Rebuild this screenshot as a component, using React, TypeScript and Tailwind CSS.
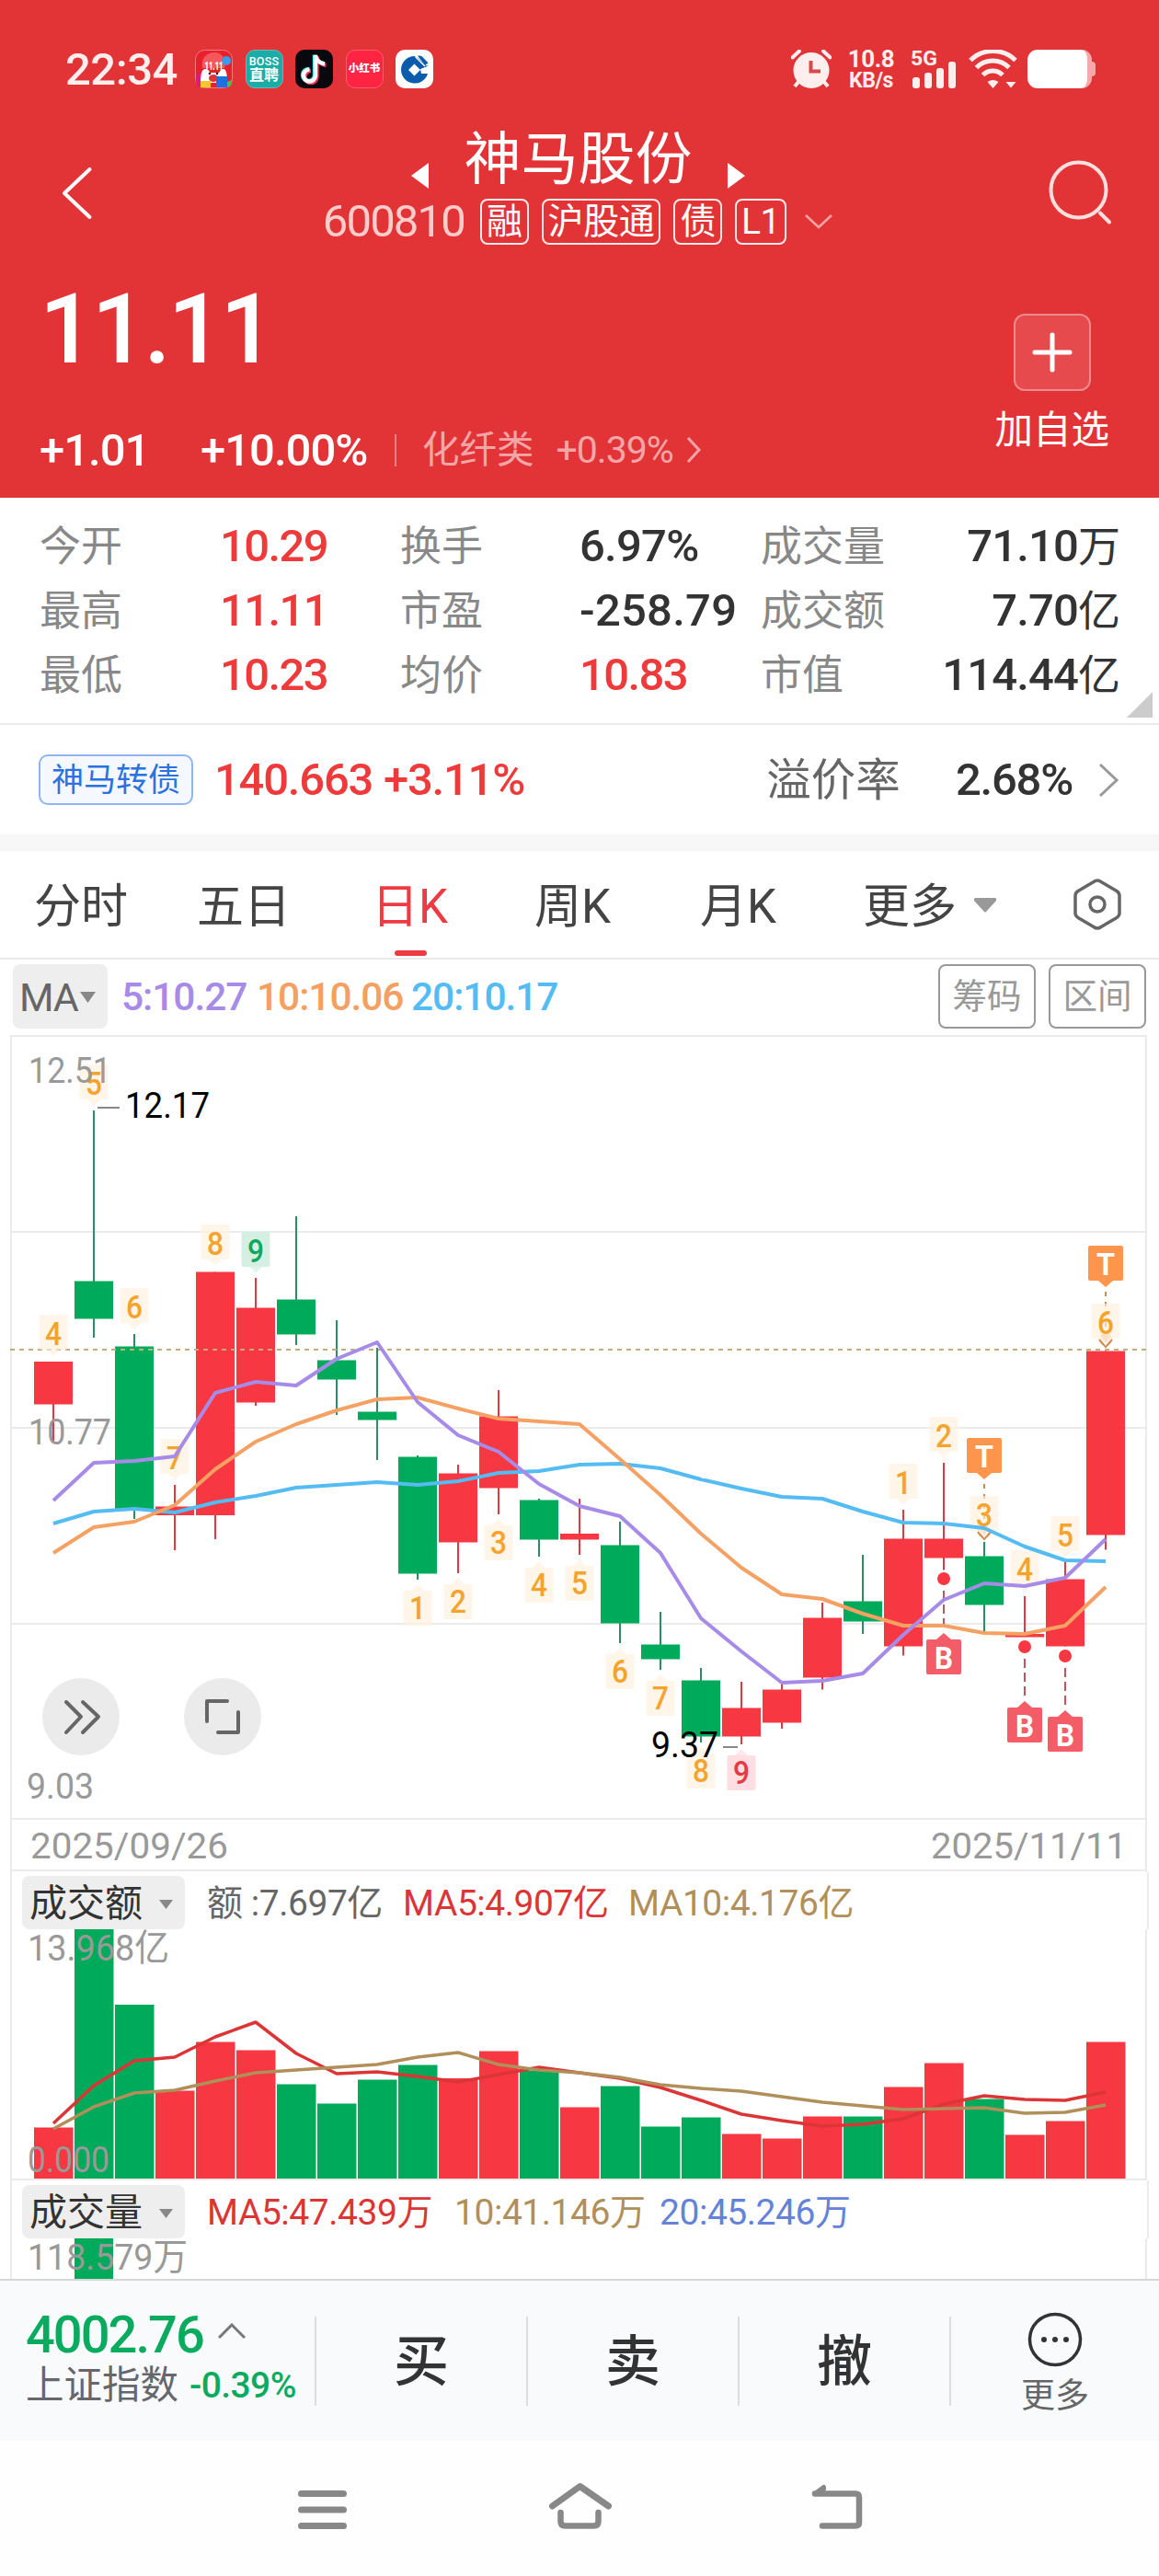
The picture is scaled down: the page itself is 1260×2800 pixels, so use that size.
import type { ReactNode } from "react";

const UP = "#f73842";
const DOWN = "#00aa5b";

// [high, low, bodyTop, bodyBottom, isUp]
const candles: [number, number, number, number, boolean][] = [
  [1480, 1568, 1480, 1526.5, true],
  [1207, 1454, 1392.5, 1433.5, false],
  [1450, 1651, 1463.5, 1640, false],
  [1614, 1685, 1637.5, 1647, true],
  [1382.5, 1673, 1382.5, 1647, true],
  [1389, 1528, 1421.5, 1524.5, true],
  [1322, 1462, 1412.5, 1450.5, false],
  [1435, 1538, 1478.5, 1499.5, false],
  [1465, 1587, 1534.5, 1543.5, false],
  [1582, 1717, 1583.5, 1710.5, false],
  [1592, 1710, 1601.5, 1676.5, true],
  [1511, 1646, 1539.5, 1617.5, true],
  [1629, 1692, 1630.5, 1673.5, false],
  [1629, 1690, 1667, 1673.5, true],
  [1654, 1786, 1679.5, 1764.5, false],
  [1752, 1815, 1787.5, 1803.5, false],
  [1813, 1894, 1826.5, 1887.5, false],
  [1828, 1896, 1856.5, 1887.5, true],
  [1831, 1879, 1836.5, 1872.5, true],
  [1742, 1836.5, 1758.5, 1823.5, true],
  [1690, 1776, 1740.5, 1762.5, false],
  [1641, 1799.5, 1672.5, 1789.5, true],
  [1590, 1706.5, 1672.5, 1693.5, true],
  [1676, 1775, 1691.5, 1744.5, false],
  [1735, 1779, 1776, 1779.5, true],
  [1697, 1789.5, 1716.5, 1789.5, true],
  [1468.5, 1684.5, 1468.5, 1668.5, true],
];

const ma5 = [1631, 1590, 1588, 1583, 1514, 1502, 1506, 1477, 1459, 1524, 1560, 1578, 1613, 1637, 1648, 1688, 1759, 1795, 1829, 1827, 1819, 1777, 1739, 1721, 1724, 1715, 1673];
const ma10 = [1688, 1660, 1654, 1636, 1597, 1567, 1548, 1533, 1521, 1519, 1531, 1542, 1545, 1548, 1586, 1625, 1667, 1704, 1733, 1738, 1754, 1767, 1767, 1775, 1776, 1767, 1725];
const ma20 = [1656, 1643, 1640, 1644, 1633, 1626, 1617, 1614, 1611, 1614, 1610, 1601, 1599, 1592, 1591, 1596, 1608, 1618, 1627, 1629, 1643, 1655, 1656, 1661, 1681, 1696, 1697];

const amountTops = [2312.5, 2097, 2179, 2272.5, 2219.5, 2228.5, 2265.5, 2286.5, 2260.5, 2244.5, 2259, 2229.5, 2251, 2290.5, 2267.5, 2311.5, 2301.5, 2319.5, 2324.5, 2300.5, 2300.5, 2268.5, 2242.5, 2281.5, 2320.5, 2305.5, 2219.5];
const amountMa5 = [2308, 2267, 2240, 2236, 2214, 2198, 2232, 2254, 2252, 2257, 2263, 2255, 2247, 2253, 2259, 2269, 2283, 2298, 2305, 2311, 2309, 2303, 2287, 2278, 2282, 2283, 2274];
const amountMa10 = [2314, 2290, 2275, 2272, 2262, 2253, 2250, 2247, 2244, 2236, 2231, 2244, 2250, 2253, 2258, 2266, 2270, 2273, 2279, 2285, 2289, 2293, 2292, 2291, 2297, 2296, 2288];

// nine-turn counters: [candle index, digit, box top, arrow side, tone]
const counters: [number, string, number, "down" | "up", string?][] = [
  [0, "4", 1429, "down"],
  [1, "5", 1157, "down"],
  [2, "6", 1400, "down"],
  [3, "7", 1564, "down"],
  [4, "8", 1331, "down"],
  [5, "9", 1339, "down", "green"],
  [9, "1", 1729, "up"],
  [10, "2", 1722, "up"],
  [11, "3", 1658, "up"],
  [12, "4", 1704, "up"],
  [13, "5", 1702, "up"],
  [14, "6", 1798, "up"],
  [15, "7", 1827, "up"],
  [16, "8", 1906, "up"],
  [17, "9", 1908, "up", "red"],
  [21, "1", 1591, "down"],
  [22, "2", 1540, "down"],
  [23, "3", 1626, "down"],
  [24, "4", 1685, "down"],
  [25, "5", 1648, "down"],
  [26, "6", 1417, "down"],
];

const cx = (i: number) => 58 + i * 44;
const toPoints = (ys: number[]) => ys.map((y, i) => `${cx(i)},${y}`).join(" ");

const ChartText = ({ x, y, w, size = 39.5, fill = "#999", weight = 400, children }: { x: number; y: number; w: number; size?: number; fill?: string; weight?: number; children: string }) => (
  <text x={x} y={y} fontSize={size} fill={fill} fontWeight={weight} textLength={w} lengthAdjust="spacingAndGlyphs">
    {children}
  </text>
);

const Counter = ({ i, digit, top, side, tone }: { i: number; digit: string; top: number; side: string; tone?: string }) => {
  const x = cx(i);
  const bg = tone === "green" ? "#d3efe2" : tone === "red" ? "#ffdce0" : "#ffefdd";
  const fg = tone === "green" ? "#0ea661" : tone === "red" ? "#e63946" : "#f6a32c";
  const tip = side === "down" ? `M${x - 7} ${top + 38}h14l-7 7z` : `M${x - 7} ${top}h14l-7 -7z`;
  const baseline = side === "down" ? top + 33 : top + 31;
  return (
    <g>
      <rect x={x - 15.5} y={top} width="31" height="38" rx="2" fill={bg} fillOpacity={tone ? 0.95 : 0.65} />
      <path d={tip} fill={bg} fillOpacity="0.65" />
      <text x={x} y={baseline} fontSize="35" fontWeight="500" fill={fg} textAnchor="middle" textLength="18" lengthAdjust="spacingAndGlyphs">
        {digit}
      </text>
    </g>
  );
};

const SellMark = ({ i, top }: { i: number; top: number }) => {
  const x = cx(i);
  return (
    <g>
      <path d={`M${x} ${top + 50}V${top + 96}`} stroke="#c98f55" strokeWidth="2" strokeDasharray="5 6" />
      <circle cx={x} cy={top + 102} r="7" fill="#fbc295" />
      <path d={`M${x - 7} ${top + 102}l7 8l7 -8`} fill="none" stroke="#d08b50" strokeWidth="2" />
      <path d={`M${x - 6} ${top + 99}l6 8l6 -8`} fill="none" stroke="#fff" strokeWidth="2" />
      <rect x={x - 19} y={top} width="38" height="38" rx="2" fill="#fd954c" />
      <path d={`M${x - 8} ${top + 38}h16l-8 7z`} fill="#fd954c" />
      <text x={x} y={top + 31.5} fontSize="34" fontWeight="700" fill="#fff" textAnchor="middle" textLength="20" lengthAdjust="spacingAndGlyphs">
        T
      </text>
    </g>
  );
};

const BuyMark = ({ i, dot, top }: { i: number; dot: number; top: number }) => {
  const x = cx(i);
  return (
    <g>
      <circle cx={x} cy={dot} r="7" fill={UP} />
      <path d={`M${x} ${dot + 13}V${top - 12}`} stroke="#c05560" strokeWidth="2" strokeDasharray="10 5" />
      <rect x={x - 19} y={top} width="38" height="38" rx="2" fill="#f45d68" />
      <path d={`M${x - 8} ${top}h16l-8 -7z`} fill="#f45d68" />
      <text x={x} y={top + 32} fontSize="34" fontWeight="700" fill="#fff" textAnchor="middle" textLength="20" lengthAdjust="spacingAndGlyphs">
        B
      </text>
    </g>
  );
};

const StatusBar = () => (
  <div className="flex h-[42px] items-center pl-[71px] pr-[69px]">
    <span className="w-[141px] text-[49px] font-medium leading-none tracking-[-0.01em] text-[#ffeeee]">22:34</span>
    <div className="flex gap-[13.5px]">
      {/* shopping app */}
      <svg className="h-[42px] w-[41px]" viewBox="0 0 41 42">
        <rect x=".5" y=".5" width="40" height="41" rx="10" fill="#e8202b" stroke="#f27a80" />
        <path d="M8 20C6 8 14 3 21 3s14 6 11 17z" fill="#f4575c" />
        <circle cx="34" cy="12" r="5" fill="#3b9be8" />
        <path d="M1 27l10-4v18h-4q-6 0-6-7z" fill="#e2197c" />
        <path d="M6 36q0-15 5-15q4 0 5 4h10q2-4 5-4q4 0 4 15z" fill="#fff" />
        <ellipse cx="20" cy="31" rx="5" ry="4" fill="#e03138" />
        <circle cx="16" cy="26" r="1.3" fill="#222" />
        <circle cx="24" cy="26" r="1.3" fill="#222" />
        <rect x="6" y="34" width="11" height="7" fill="#f8c62c" />
        <rect x="23" y="29" width="12" height="12" fill="#1f6fe0" />
        <path d="M35 35l5-2q1 7-5 8z" fill="#4cc04a" />
        <text x="20.500" y="22" fontSize="13" fontWeight="900" fill="#fff" textAnchor="middle" textLength="20" lengthAdjust="spacingAndGlyphs">11.11</text>
      </svg>
      <div className="flex h-[42px] w-[41px] flex-col items-center justify-center rounded-[10px] border border-[#6cb9b4] bg-[#1aada7] font-medium text-white">
        <span className="text-[12.5px] leading-[13px] tracking-[0.02em]">BOSS</span>
        <span className="text-[16px] font-bold leading-[17px]">直聘</span>
      </div>
      <svg className="h-[42px] w-[41px]" viewBox="0 0 41 42">
        <rect width="41" height="42" rx="10" fill="#08080f" />
        <g fill="none" strokeWidth="4.400">
          <path d="M22 6v22a6.500 6.500 0 1 1-6.500-6.500M22 6q1 8 10 9.500" stroke="#2be6e0" transform="translate(-1 -.5)" />
          <path d="M22 6v22a6.500 6.500 0 1 1-6.500-6.500M22 6q1 8 10 9.500" stroke="#f5305a" transform="translate(1.500 1.500)" />
          <path d="M22 6v22a6.500 6.500 0 1 1-6.500-6.500M22 6q1 8 10 9.500" stroke="#fff" />
        </g>
      </svg>
      <div className="flex h-[42px] w-[41px] items-center justify-center rounded-[10px] border border-[#ff5a6c] bg-[#ff2442] text-[11.5px] font-black leading-none text-white">
        小红书
      </div>
      <svg className="h-[42px] w-[41px]" viewBox="0 0 41 42">
        <rect width="41" height="42" rx="10" fill="#fff" />
        <path d="M20.500 7a14.800 14.800 0 1 0 14.500 19h-7l-1-5 9-3.500-2.500 0-9-8.500z" fill="#0c5cae" />
        <path d="M24 6.500q3-.5 5 1l6.500 7-3.500 2.500z" fill="#0c5cae" />
        <path d="M21.500 7.500L32 18" stroke="#fff" strokeWidth="1.500" />
        <path d="M20.500 15.500l6.500 6.500-6.500 6.500-6.500-6.500z" fill="#fff" />
      </svg>
    </div>

    <div className="ml-auto flex h-[42px] items-start">
      <svg className="h-[42px] w-[44px]" viewBox="0 0 44 42">
        <circle cx="22" cy="22.500" r="19.500" fill="#ffeeee" />
        <path d="M8 35l-4 5M36 35l4 5" stroke="#ffeeee" strokeWidth="4" />
        <path d="M1.500 8.500L9 1.500M42.500 8.500L35 1.500" stroke="#ffeeee" strokeWidth="4" strokeLinecap="round" />
        <path d="M21.500 12v11.500h10.500" stroke="#d9494b" strokeWidth="4" fill="none" />
      </svg>
      <div className="ml-[15px] flex w-[56px] flex-col items-center whitespace-nowrap text-[#ffeeee]">
        <span className="text-[26px] font-bold leading-[21px] tracking-[-0.015em]">10.8</span>
        <span className="mt-[1px] text-[23px] font-bold leading-[24px] tracking-[-0.02em]">KB/s</span>
      </div>
      <svg className="ml-[15px] h-[42px] w-[52px] overflow-visible" viewBox="0 0 52 42">
        <text x="0" y="16.500" fontSize="22.500" fontWeight="700" fill="#ffeeee" textLength="29" lengthAdjust="spacingAndGlyphs">5G</text>
        <g fill="#ffeeee">
          <rect x="2" y="30" width="8" height="12" rx="3" />
          <rect x="15" y="25" width="8" height="17" rx="3" />
          <rect x="28" y="20" width="8" height="22" rx="3" />
          <rect x="41" y="13" width="8" height="29" rx="3" />
        </g>
      </svg>
      <svg className="ml-[11px] h-[42px] w-[53px]" viewBox="0 0 53 42">
        <g fill="none" stroke="#ffeeee" strokeWidth="5">
          <path d="M2 11.500a35 35 0 0 1 49 0" />
          <path d="M8.500 19.500a25 25 0 0 1 35.500 0" />
          <path d="M15.500 27.500a15 15 0 0 1 21.500 0" />
        </g>
        <path d="M20.500 35q6-4 12 0l-6 7zM40.500 35h11l-5.500 6.500z" fill="#ffeeee" />
      </svg>
      <div className="ml-[11px] h-[42px] w-[70px] rounded-[11px] border-r-[5px] border-[#f5a9aa] bg-white" />
      <div className="mt-[13px] h-[16px] w-[4px] rounded-r-[4px] bg-[#f5a9aa]" />
    </div>
  </div>
);

const Tag = ({ children }: { children: ReactNode }) => (
  <span className="flex h-[50px] items-center justify-center rounded-[8px] border-2 border-[#ffe9e9] px-[5px] text-[39px] leading-none tracking-[-0.01em] text-white">{children}</span>
);

const Header = () => (
  <header className="h-[541px] bg-[#e23437] pt-[54px] text-white">
    <StatusBar />
    <div className="flex items-start justify-between pl-[67px] pr-[50px] pt-[42px]">
      <svg className="mt-[42px] h-[60px] w-[36px]" viewBox="0 0 36 60" fill="none" stroke="#fff" strokeWidth="4" strokeLinecap="round" strokeLinejoin="round">
        <path d="M30.500 4L3 30l27.500 26" />
      </svg>
      <div className="flex flex-col items-center pl-[16px]">
        <div className="flex items-center">
          <svg className="mt-[34px] h-[30px] w-[21px]" viewBox="0 0 21 30"><path d="M20 1v28L1 15z" fill="#fff" /></svg>
          <h1 className="mx-[37px] h-[72px] pt-[3px] text-[62px] leading-[66px]">神马股份</h1>
          <svg className="mt-[34px] h-[30px] w-[21px]" viewBox="0 0 21 30"><path d="M1 1v28l19-14z" fill="#fff" /></svg>
        </div>
        <div className="mt-[6px] flex items-center gap-[14px]">
          <span className="mr-[3px] text-[49px] leading-[50px] tracking-[-0.038em] text-[#ffcccc]">600810</span>
          <Tag>融</Tag>
          <Tag>沪股通</Tag>
          <Tag>债</Tag>
          <Tag>L1</Tag>
          <svg className="ml-[5px] h-[18px] w-[32px]" viewBox="0 0 32 18" fill="none" stroke="#f3a5a6" strokeWidth="2.500">
            <path d="M2 2l14 13L30 2" />
          </svg>
        </div>
      </div>
      <svg className="mt-[35px] h-[72px] w-[72px]" viewBox="0 0 72 72" fill="none" stroke="#ffdede" strokeWidth="4" strokeLinecap="round">
        <circle cx="34.500" cy="33.500" r="30" />
        <path d="M58 58.500l10 10" />
      </svg>
    </div>

    <div className="flex justify-between pl-[43px] pr-[54px]">
      <div>
        <div className="mt-[40px] h-[106px] text-[105px] font-medium leading-[106px] tracking-[-0.028em]">11.11</div>
        <div className="mt-[52px] flex h-[50px] items-center text-[49px] font-medium leading-none tracking-[-0.02em]">
          <span className="w-[175px]">+1.01</span>
          <span className="w-[211px]">+10.00%</span>
          <span className="h-[35px] w-[2px] bg-[#ed8082]" />
          <span className="ml-[28px] text-[40.500px] font-normal tracking-normal text-[#f3a6a7]">化纤类</span>
          <span className="ml-[24px] text-[41px] font-normal text-[#f3a6a7]">+0.39%</span>
          <svg className="ml-[14px] h-[30px] w-[17px]" viewBox="0 0 17 30" fill="none" stroke="#f3a6a7" strokeWidth="3"><path d="M2 2l12 13L2 28" /></svg>
        </div>
      </div>
      <div className="flex flex-col items-center pt-[75px]">
        <button className="flex h-[84px] w-[84px] items-center justify-center rounded-[12px] border-2 border-[#ec8a8c] bg-[#e64a4c]">
          <svg className="h-[44px] w-[44px]" viewBox="0 0 44 44" stroke="#fff" strokeWidth="5" strokeLinecap="round"><path d="M22 3v38M3 22h38" /></svg>
        </button>
        <span className="mt-[18px] text-[41.500px] leading-[50px]">加自选</span>
      </div>
    </div>
  </header>
);

const quotes = [
  ["今开", "10.29", "换手", "6.97%", "成交量", "71.10万"],
  ["最高", "11.11", "市盈", "-258.79", "成交额", "7.70亿"],
  ["最低", "10.23", "均价", "10.83", "市值", "114.44亿"],
];

const QuoteLabel = ({ children }: { children: string }) => (
  <span className="pt-[2px] text-[45px] tracking-normal text-[#888]">{children}</span>
);

const Quotes = () => (
  <section className="relative h-[247px] border-b-2 border-[#ebebeb] bg-white pl-[43px] pr-[43px] pt-[17px]">
    {quotes.map((row, r) => (
      <div key={r} className="grid h-[70px] grid-cols-[196px_196px_195px_197px_170px_1fr] items-center whitespace-nowrap text-[49px] leading-none tracking-[-0.033em] text-[#333]">
        <QuoteLabel>{row[0]}</QuoteLabel>
        <span className="font-medium text-[#ee3a3a]">{row[1]}</span>
        <QuoteLabel>{row[2]}</QuoteLabel>
        <span className={r === 0 ? "font-medium tracking-[-0.015em]" : r === 1 ? "font-medium tracking-[0.005em]" : "font-medium text-[#ee3a3a]"}>{row[3]}</span>
        <QuoteLabel>{row[4]}</QuoteLabel>
        <span className="flex items-center justify-end font-medium tracking-[-0.018em]">
          {row[5].slice(0, -1)}
          <span className="pt-[2px] text-[46px] font-normal">{row[5].slice(-1)}</span>
        </span>
      </div>
    ))}
    <svg className="absolute bottom-[6px] right-[7px] h-[28px] w-[28px]" viewBox="0 0 28 28"><path d="M28 0v28H0z" fill="#ccc" /></svg>
  </section>
);

const BondRow = () => (
  <section className="flex h-[119px] items-center bg-white pl-[42px] pr-[43px] text-[49px] font-medium leading-none tracking-[-0.025em]">
    <span className="flex h-[55px] w-[168px] items-center justify-center rounded-[10px] border-2 border-[#8fb5f0] bg-[#f5f9ff] pt-[2px] text-[35px] font-normal tracking-normal text-[#2a72e0]">神马转债</span>
    <span className="ml-[23px] w-[184px] text-[#ee3a3a]">140.663</span>
    <span className="text-[#ee3a3a]">+3.11%</span>
    <span className="ml-auto pt-[3px] text-[48.500px] font-normal tracking-normal text-[#666]">溢价率</span>
    <span className="ml-[60px] text-[#333]">2.68%</span>
    <svg className="ml-[27px] h-[38px] w-[24px]" viewBox="0 0 24 38" fill="none" stroke="#999" strokeWidth="3"><path d="M3 2l18 17L3 36" /></svg>
  </section>
);

const Tabs = () => (
  <nav className="flex h-[118px] items-center border-b-2 border-[#ebebeb] bg-white pl-[37px] text-[51px] leading-none text-[#444]">
    <span className="w-[177px] pt-[4px]">分时</span>
    <span className="w-[190px] pt-[4px]">五日</span>
    <span className="relative w-[177px] pt-[4px] text-[#ee3a42]">
      日K
      <i className="absolute left-[25px] top-[77px] h-[6px] w-[35px] rounded-full bg-[#ee3a42]" />
    </span>
    <span className="w-[180px] pt-[4px]">周K</span>
    <span className="w-[177px] pt-[4px]">月K</span>
    <span className="pt-[4px]">更多</span>
    <svg className="ml-[18px] mt-[2px] h-[16px] w-[26px]" viewBox="0 0 26 16"><path d="M2 0h22q2 1 1 3L14 15q-1 1-2 0L1 3Q0 1 2 0z" fill="#999" /></svg>
    <svg className="ml-[82px] h-[58px] w-[54px]" viewBox="0 0 54 58" fill="none" stroke="#666" strokeWidth="3.500" strokeLinejoin="round">
      <path d="M27 3q2 0 4 1.500l17 10q3 2 3 5v19q0 3-3 5l-17 10q-4 3-8 0l-17-10q-3-2-3-5v-19q0-3 3-5l17-10Q25 3 27 3z" />
      <circle cx="27" cy="29" r="8" />
    </svg>
  </nav>
);

const MaRow = () => (
  <div className="flex h-[82px] items-center bg-white pb-[2px] pl-[14px] pr-[14px] text-[42.500px] leading-none tracking-[-0.025em]">
    <span className="flex h-[70px] w-[103px] items-center rounded-[8px] bg-[#eeeeee] pl-[7px] pt-[2px] text-[43px] text-[#666]">
      MA
      <svg className="ml-[2px] h-[12px] w-[17px]" viewBox="0 0 17 12"><path d="M0 0h17l-8.500 12z" fill="#888" /></svg>
    </span>
    <span className="ml-[15px] w-[147px] pt-[3px] font-medium text-[#a78be8]">5:10.27</span>
    <span className="w-[168px] pt-[3px] font-medium text-[#f5a063]">10:10.06</span>
    <span className="pt-[3px] font-medium text-[#54bcf5]">20:10.17</span>
    <span className="ml-auto flex h-[70px] w-[106px] items-center justify-center rounded-[8px] border-2 border-[#999] pt-[2px] text-[37.500px] tracking-normal text-[#999]">筹码</span>
    <span className="ml-[14px] flex h-[70px] w-[106px] items-center justify-center rounded-[8px] border-2 border-[#999] pt-[2px] text-[37.500px] tracking-normal text-[#999]">区间</span>
  </div>
);

const KLineChart = () => (
  <svg className="block h-[910px] w-[1260px]" viewBox="0 1125 1260 910">
    <g stroke="#ebebeb" strokeWidth="2">
      <path d="M11 1126H1247M12 1339H1247M12 1552H1247M12 1765H1247M12 1977H1247M12 2033H1247" />
      <path d="M12 1125V2035M1246 1125V2035" />
    </g>
    {candles.map(([high, low, top, bottom, up], i) => (
      <g key={i}>
        <rect x={cx(i) - 1} y={high} width="2" height={low - high} fill={up ? "#e23a44" : "#2a8f62"} />
        <rect x={cx(i) - 21} y={top} width="42" height={bottom - top} fill={up ? UP : DOWN} />
      </g>
    ))}
    <path d="M11 1467H1246" stroke="#c8ab7a" strokeWidth="2" strokeDasharray="5 5" />

    <BuyMark i={22} dot={1716} top={1782} />
    <BuyMark i={24} dot={1790} top={1856} />
    <BuyMark i={25} dot={1800} top={1866} />
    <SellMark i={23} top={1563} />
    <SellMark i={26} top={1354} />
    {counters.map(([i, digit, top, side, tone]) => (
      <Counter key={i} i={i} digit={digit} top={top} side={side} tone={tone} />
    ))}

    <g fill="none" strokeWidth="4" strokeLinejoin="round">
      <polyline points={toPoints(ma20)} stroke="#54bcf2" />
      <polyline points={toPoints(ma10)} stroke="#f5a163" />
      <polyline points={toPoints(ma5)} stroke="#a78be8" />
    </g>

    <ChartText x={31} y={1177} w={90}>12.51</ChartText>
    <ChartText x={31} y={1570} w={90}>10.77</ChartText>
    <ChartText x={29} y={1955} w={73}>9.03</ChartText>
    <path d="M106 1204h24M786 1899h16" stroke="#888" strokeWidth="2" />
    <ChartText x={136} y={1215} w={92} fill="#000">12.17</ChartText>
    <ChartText x={708} y={1910} w={73} fill="#000">9.37</ChartText>
    <ChartText x={33} y={2020} w={215}>2025/09/26</ChartText>
    <ChartText x={1012} y={2020} w={213}>2025/11/11</ChartText>

    <g>
      <circle cx="88" cy="1866" r="42" fill="#ebebeb" />
      <circle cx="242" cy="1866" r="42" fill="#ebebeb" />
      <g fill="none" stroke="#666" strokeWidth="4" strokeLinecap="round" strokeLinejoin="round">
        <path d="M72 1850l16 16l-16 17M90 1850l17 16l-17 17" />
        <path d="M225 1871v-22h22M259 1861v22h-22" />
      </g>
    </g>
  </svg>
);

const IndicatorChip = ({ children }: { children: string }) => (
  <span className="mr-[24px] flex h-[58px] w-[177px] items-center rounded-[8px] bg-[#eeeeee] pl-[8px] pt-[3px] text-[41px] tracking-normal text-[#333]">
    {children}
    <svg className="ml-[18px] h-[10px] w-[15px]" viewBox="0 0 15 10"><path d="M0 0h15l-7.500 10z" fill="#888" /></svg>
  </span>
);

const AmountPanel = () => (
  <section className="bg-white">
    <div className="mx-[11px] flex h-[62px] items-center border-x-2 border-[#ebebeb] pl-[11px] pt-[4px] text-[39px] leading-none tracking-[-0.012em]">
      <IndicatorChip>成交额</IndicatorChip>
      <span className="w-[213px] whitespace-pre pt-[3px] text-[#666]">额 :7.697亿</span>
      <span className="w-[245px] pt-[3px] text-[#dc3536]">MA5:4.907亿</span>
      <span className="pt-[3px] text-[#b08f5a]">MA10:4.176亿</span>
    </div>
    <svg className="block h-[273px] w-[1260px] overflow-visible" viewBox="0 2097 1260 273">
      <path d="M12 2097V2370M1246 2097V2370M12 2369H1247" stroke="#ebebeb" strokeWidth="2" />
      {amountTops.map((top, i) => (
        <rect key={i} x={cx(i) - 21} y={top} width="42.500" height={2368 - top} fill={candles[i][4] ? UP : DOWN} />
      ))}
      <g fill="none" strokeWidth="3.500" strokeLinejoin="round">
        <polyline points={toPoints(amountMa5)} stroke="#dc3536" />
        <polyline points={toPoints(amountMa10)} stroke="#b08f5a" />
      </g>
      <ChartText x={30} y={2131} w={154}>13.968亿</ChartText>
      <ChartText x={30} y={2361} w={89}>0.000</ChartText>
    </svg>
  </section>
);

const VolumePanel = () => (
  <section className="bg-white">
    <div className="mx-[11px] flex h-[63px] items-center border-x-2 border-[#ebebeb] pl-[11px] pt-[5px] text-[39px] leading-none tracking-[-0.012em]">
      <IndicatorChip>成交量</IndicatorChip>
      <span className="w-[269px] pt-[3px] text-[#dc3536]">MA5:47.439万</span>
      <span className="w-[223px] pt-[3px] text-[#b08f5a]">10:41.146万</span>
      <span className="pt-[3px] text-[#6482d8]">20:45.246万</span>
    </div>
    <svg className="block h-[44px] w-[1260px] overflow-visible" viewBox="0 2433 1260 44">
      <path d="M12 2433V2477M1246 2433V2477" stroke="#ebebeb" strokeWidth="2" />
      <rect x={cx(1) - 21} y="2433" width="42" height="44" fill={DOWN} />
      <ChartText x={30} y={2467} w={174}>118.579万</ChartText>
    </svg>
  </section>
);

const TradeBar = () => (
  <footer className="flex h-[176px] border-t-2 border-[#d4d6da] bg-[#f9fafc] leading-none">
    <div className="w-[342px] pl-[28px] pt-[31px]">
      <div className="flex h-[56px] items-center text-[56px] font-medium tracking-[-0.035em] text-[#0aab5f]">
        4002.76
        <svg className="mb-[8px] ml-[16px] h-[18px] w-[30px]" viewBox="0 0 30 18" fill="none" stroke="#777" strokeWidth="3"><path d="M1 16L15 2l14 14" /></svg>
      </div>
      <div className="mt-[5px] flex h-[44px] items-center whitespace-nowrap text-[41.500px] text-[#66676c]">
        上证指数
        <span className="ml-[12px] text-[39px] font-medium tracking-[-0.015em] text-[#0aab5f]">-0.39%</span>
      </div>
    </div>
    {["买", "卖", "撤"].map((label) => (
      <div key={label} className="mt-[39px] flex h-[97px] w-[230px] items-center justify-center border-l-2 border-[#dcdde0] pt-[3px] text-[60px] font-medium text-[#333]">
        {label}
      </div>
    ))}
    <div className="mt-[39px] flex h-[97px] flex-1 flex-col items-center border-l-2 border-[#dcdde0] text-[37px] text-[#666]">
      <svg className="mt-[-6px] h-[62px] w-[62px] shrink-0" viewBox="0 0 62 62">
        <circle cx="31" cy="31" r="27.500" fill="none" stroke="#333" strokeWidth="3.500" />
        <g fill="#333"><circle cx="19" cy="31" r="3" /><circle cx="31" cy="31" r="3" /><circle cx="43" cy="31" r="3" /></g>
      </svg>
      <span className="mt-[12px]">更多</span>
    </div>
  </footer>
);

const SystemNav = () => (
  <div className="flex h-[147px] items-start bg-[#fefefe] pl-[324px] pt-[43px]">
    <svg className="h-[56px] w-[54px]" viewBox="0 0 54 56" stroke="#888" strokeWidth="7" strokeLinecap="round">
      <path d="M3.500 14.500h46M3.500 32h46M3.500 49.500h46" />
    </svg>
    {/* home */}
    <svg className="ml-[218px] h-[56px] w-[72px]" viewBox="0 0 72 56" fill="none" stroke="#888" strokeLinecap="round" strokeLinejoin="round">
      <path d="M4.500 28L34.500 6.500l31 21.500" strokeWidth="7" />
      <path d="M13.500 35v9.500q0 5 5 5h31q5 0 5-5V35" strokeWidth="6.500" />
    </svg>
    {/* back */}
    <svg className="ml-[213px] h-[56px] w-[60px]" viewBox="0 0 60 56" fill="none" stroke="#888" strokeWidth="6.500" strokeLinecap="round" strokeLinejoin="round">
      <path d="M5 14.500h44q4 0 4 4v27q0 4-4 4H13" />
      <path d="M5 14.500L14.500 7.500v2l-4 5z" fill="#888" strokeWidth="5" />
    </svg>
  </div>
);

const App = () => {
  return (
    <div className="h-[2800px] w-[1260px] overflow-hidden bg-white font-[Roboto,'Noto_Sans_CJK_SC',sans-serif]">
      <Header />
      <Quotes />
      <BondRow />
      <div className="h-[18px] bg-[#f7f7f7]" />
      <Tabs />
      <MaRow />
      <KLineChart />
      <AmountPanel />
      <VolumePanel />
      <TradeBar />
      <SystemNav />
    </div>
  );
};

export default App;
